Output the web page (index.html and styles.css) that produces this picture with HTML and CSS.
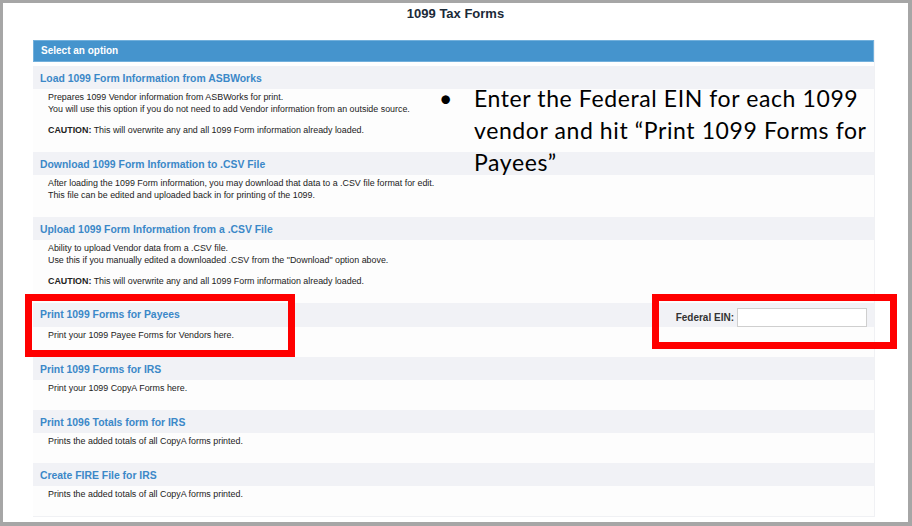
FILE: index.html
```
<!DOCTYPE html>
<html lang="en">

<head>
    <meta charset="UTF-8">
    <meta name="viewport" content="width=device-width, initial-scale=1.0">
    <title>1099 Tax Forms</title>
    <link rel="stylesheet" href="styles.css">
</head>

<body>

    <div class="slide">
        <h1 class="page-title">1099 Tax Forms</h1>

        <div class="panel">
            <div class="panel-head">Select an option</div>

            <div class="option">
                <div class="option-title"><a href="#">Load 1099 Form Information from ASBWorks</a></div>
                <div class="option-body">
                    <p>Prepares 1099 Vendor information from ASBWorks for print.<br>
                        You will use this option if you do not need to add Vendor information from an outside source.</p>
                    <p><b>CAUTION:</b> This will overwrite any and all 1099 Form information already loaded.</p>
                </div>
            </div>

            <div class="option">
                <div class="option-title"><a href="#">Download 1099 Form Information to .CSV File</a></div>
                <div class="option-body">
                    <p>After loading the 1099 Form information, you may download that data to a .CSV file format for edit.<br>
                        This file can be edited and uploaded back in for printing of the 1099.</p>
                </div>
            </div>

            <div class="option">
                <div class="option-title"><a href="#">Upload 1099 Form Information from a .CSV File</a></div>
                <div class="option-body">
                    <p>Ability to upload Vendor data from a .CSV file.<br>
                        Use this if you manually edited a downloaded .CSV from the "Download" option above.</p>
                    <p><b>CAUTION:</b> This will overwrite any and all 1099 Form information already loaded.</p>
                </div>
            </div>

            <div class="option">
                <div class="option-title with-field">
                    <a href="#">Print 1099 Forms for Payees</a>
                    <label class="ein">Federal EIN: <input type="text" class="ein-input"></label>
                </div>
                <div class="option-body">
                    <p>Print your 1099 Payee Forms for Vendors here.</p>
                </div>
            </div>

            <div class="option">
                <div class="option-title"><a href="#">Print 1099 Forms for IRS</a></div>
                <div class="option-body">
                    <p>Print your 1099 CopyA Forms here.</p>
                </div>
            </div>

            <div class="option">
                <div class="option-title"><a href="#">Print 1096 Totals form for IRS</a></div>
                <div class="option-body">
                    <p>Prints the added totals of all CopyA forms printed.</p>
                </div>
            </div>

            <div class="option">
                <div class="option-title"><a href="#">Create FIRE File for IRS</a></div>
                <div class="option-body">
                    <p>Prints the added totals of all CopyA forms printed.</p>
                </div>
            </div>
        </div>

        <!-- slide annotations -->
        <div class="note">
            <span class="bullet">&bull;</span>
            <span>Enter the Federal EIN for each 1099<br>vendor and hit &ldquo;Print 1099 Forms for<br>Payees&rdquo;</span>
        </div>
        <div class="callout callout-payees"></div>
        <div class="callout callout-ein"></div>
    </div>

</body>

</html>
```

FILE: styles.css
```
body {
    margin: 0;
    font-family: 'Liberation Sans', Arial, sans-serif;
}

.slide {
    position: relative;
    height: 526px;
    box-sizing: border-box;
    border-style: solid;
    border-color: #a6a6a6;
    border-width: 3px 4px 4px 3px;
    background-color: #fff;
}

.page-title {
    margin: 3px 0 0;
    font-size: 13px;
    line-height: 16px;
    text-align: center;
    color: #1b2a38;
}

.panel {
    width: 842px;
    margin: 18px 0 0 30px;
    box-sizing: border-box;
    border-right: 1px solid #f0f1f4;
    border-bottom: 1px solid #f0f1f4;
}

.panel-head {
    height: 22px;
    box-sizing: border-box;
    padding-left: 7px;
    border: 1px solid #72b0dc;
    background-color: #4594cd;
    color: #fff;
    font-size: 10px;
    font-weight: bold;
    line-height: 20px;
    margin-bottom: 4px;
}

.option-title {
    height: 23px;
    padding-left: 7px;
    background-color: #f1f2f6;
    line-height: 22px;
}

.option-title a {
    color: #3b88c8;
    font-size: 10.4px;
    font-weight: bold;
    text-decoration: none;
}

.with-field {
    display: flex;
    justify-content: space-between;
    height: 24px;
    line-height: 23px;
}

.ein {
    display: flex;
    align-items: center;
    align-self: flex-end;
    gap: 3px;
    padding-right: 7px;
    color: #333;
    font-size: 10px;
    font-weight: bold;
    line-height: 19px;
}

.ein-input {
    width: 130px;
    height: 19px;
    box-sizing: border-box;
    margin: 0;
    border: 1px solid #cfcfcf;
    background: #fff;
}

.option-body {
    padding: 2px 0 16px 15px;
    background-color: #fdfdfd;
    color: #222;
    font-size: 8.9px;
    line-height: 12px;
}

.option-body p {
    margin: 0;
}

.option-body p + p {
    margin-top: 9px;
}

.note {
    position: absolute;
    left: 436px;
    top: 79px;
    display: flex;
    font-family: 'Lato', sans-serif;
    font-size: 23px;
    letter-spacing: 0.6px;
    line-height: 32px;
    color: #000;
    white-space: nowrap;
}

.bullet {
    width: 35px;
}

.callout {
    position: absolute;
    box-sizing: border-box;
    border: 7px solid #ff0000;
}

.callout-payees {
    left: 22px;
    top: 291px;
    width: 270px;
    height: 63px;
}

.callout-ein {
    left: 649px;
    top: 291px;
    width: 245px;
    height: 55px;
}
```
